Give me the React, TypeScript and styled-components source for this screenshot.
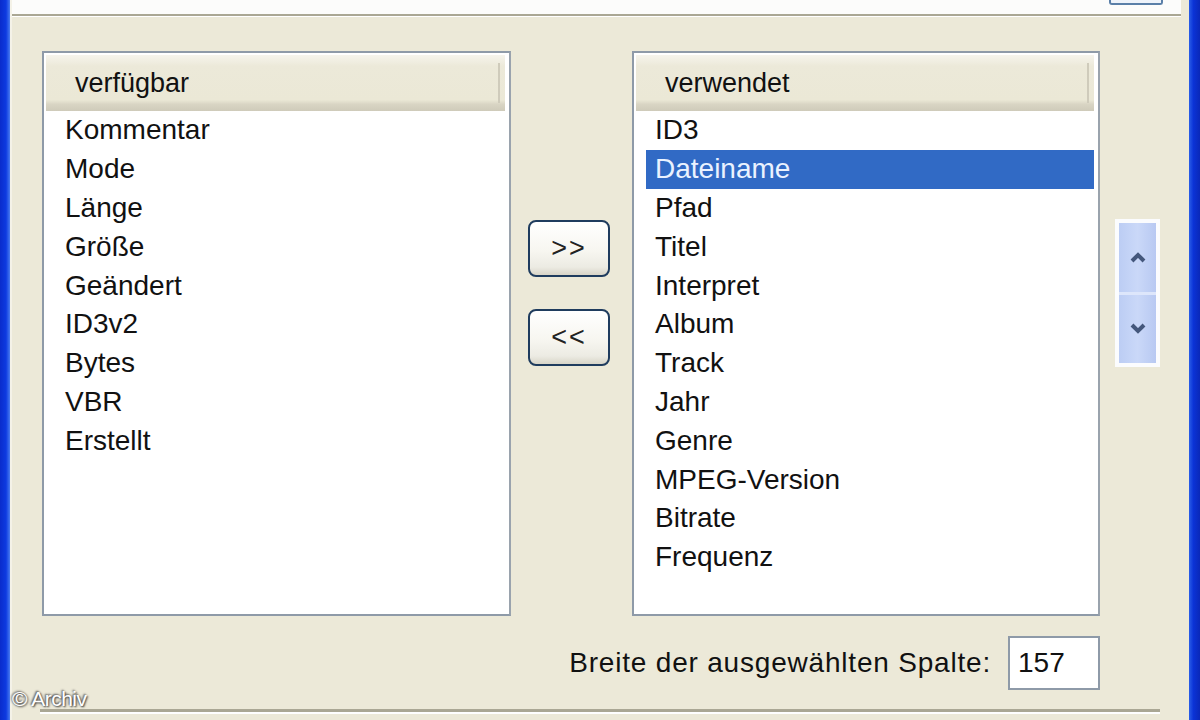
import React from 'react';
import styled, { createGlobalStyle } from 'styled-components';

// style
const GlobalStyle = createGlobalStyle`
  html, body {
    margin: 0;
    padding: 0;
    background: #ece9d8;
  }

  body {
    font-family: "Liberation Sans", Arial, sans-serif;
  }
`;

const Frame = styled.div`
  width: 1200px;
  height: 720px;
  display: flex;
  overflow: hidden;
  position: relative;
`;

const BlueEdge = styled.div<{ $side: 'left' | 'right' }>`
  flex: 0 0 ${(p) => (p.$side === 'left' ? 10 : 11)}px;
  background: ${(p) =>
    p.$side === 'left'
      ? 'linear-gradient(to right, #0a2ccc 0%, #0d3ae0 60%, #4a7cf0 100%)'
      : 'linear-gradient(to right, #2a5ee8 0%, #0b33d6 40%, #0a28b8 100%)'};
`;

const Window = styled.div`
  flex: 1;
  display: flex;
  flex-direction: column;
  background: #ece9d8;
  border-left: 2px solid #f4f2e8;
`;

const TopStrip = styled.div`
  height: 14px;
  display: flex;
  justify-content: flex-end;
  background: #fcfcfb;
  border-bottom: 2px solid #aaa794;
  box-shadow: 0 1px 0 #fff;
  margin-right: 8px;
`;

const TopButton = styled.div`
  width: 50px;
  height: 3px;
  margin-right: 18px;
  border: 2px solid #5a7fa8;
  border-top: none;
  border-radius: 0 0 3px 3px;
  background: #eef3fa;
`;

const Body = styled.div`
  flex: 1;
  display: grid;
  grid-template-columns: 469px 121px 468px 60px;
  grid-template-rows: 565px 74px;
  padding: 35px 0 0 30px;
`;

const ListBox = styled.div`
  background: #fff;
  border: 2px solid #8e9aa8;
  border-right-color: #9aa3ad;
  display: flex;
  flex-direction: column;
  padding: 2px 4px 0 2px;
  overflow: hidden;
`;

const Header = styled.div`
  height: 56px;
  display: flex;
  align-items: center;
  padding-left: 29px;
  font-size: 27px;
  color: #111;
  background: linear-gradient(
    to bottom,
    #f6f4ec 0%,
    #ece9d9 20%,
    #ebe8d6 80%,
    #d9d5c4 88%,
    #cfcbba 100%
  );
  position: relative;

  &::after {
    content: '';
    position: absolute;
    right: 5px;
    top: 8px;
    bottom: 8px;
    width: 2px;
    background: #cfcbbb;
  }
`;

const Items = styled.div`
  display: flex;
  flex-direction: column;
`;

const Item = styled.div<{ $selected?: boolean }>`
  height: 38.8px;
  display: flex;
  align-items: center;
  margin-left: 10px;
  padding-left: 9px;
  font-size: 28px;
  color: ${(p) => (p.$selected ? '#eaf2ff' : '#111')};
  background: ${(p) => (p.$selected ? '#316ac5' : 'transparent')};
`;

const MoveColumn = styled.div`
  display: flex;
  flex-direction: column;
  gap: 32px;
  padding: 169px 22px 0 17px;
`;

const MoveButton = styled.div`
  height: 53px;
  display: flex;
  align-items: center;
  justify-content: center;
  border: 2px solid #1f3c5e;
  border-radius: 8px;
  background: linear-gradient(to bottom, #ffffff 0%, #f7f6f0 55%, #ecebe3 85%, #d8d5c8 100%);
  font-size: 27px;
  color: #222;
  letter-spacing: 2px;
`;

const SpinColumn = styled.div`
  padding: 168px 0 0 15px;
`;

const Spin = styled.div`
  width: 45px;
  height: 148px;
  box-sizing: border-box;
  border: 4px solid #fbfcfe;
  display: flex;
  flex-direction: column;
  background: #c5d4f6;
`;

const SpinHalf = styled.div<{ $top?: boolean }>`
  flex: 1;
  display: flex;
  align-items: center;
  justify-content: center;
  background: linear-gradient(to right, #bccdf4 0%, #cad8f8 50%, #b8c9f2 100%);
  border-bottom: ${(p) => (p.$top ? '3px solid #dde6fb' : 'none')};
`;

const WidthRow = styled.div`
  grid-column: 1 / 4;
  display: flex;
  align-items: flex-start;
  justify-content: flex-end;
  gap: 17px;
  padding-top: 20px;
`;

const WidthLabel = styled.div`
  height: 54px;
  display: flex;
  align-items: center;
  font-size: 28px;
  color: #111;
  letter-spacing: 0.8px;
`;

const WidthInput = styled.div`
  display: flex;
  align-items: center;
  padding-left: 8px;
  box-sizing: border-box;
  width: 92px;
  height: 54px;
  background: #fff;
  border: 2px solid #8e9aa8;
  font-size: 28px;
  color: #111;
`;

const BottomRule = styled.div`
  position: absolute;
  left: 40px;
  right: 40px;
  bottom: 8px;
  height: 3px;
  background: #aaa794;
  box-shadow: 0 2px 0 #fff;
`;

const Credit = styled.div`
  position: absolute;
  left: 12px;
  bottom: 9px;
  font-size: 21px;
  color: #fff;
  text-shadow: 1px 1px 2px #333, -1px -1px 2px #555;
  letter-spacing: -0.5px;
`;

const Arrow = ({ up }: { up?: boolean }) => (
  <svg width="18" height="12" viewBox="0 0 18 12">
    <polyline
      points={up ? '3,10 9,4 15,10' : '3,2 9,8 15,2'}
      fill="none"
      stroke="#44577c"
      strokeWidth="4"
      strokeLinejoin="miter"
    />
  </svg>
);

const available = ['Kommentar', 'Mode', 'Länge', 'Größe', 'Geändert', 'ID3v2', 'Bytes', 'VBR', 'Erstellt'];
const used = [
  'ID3',
  'Dateiname',
  'Pfad',
  'Titel',
  'Interpret',
  'Album',
  'Track',
  'Jahr',
  'Genre',
  'MPEG-Version',
  'Bitrate',
  'Frequenz',
];

export default function App() {
  return (
    <Frame>
      <GlobalStyle />
      <BlueEdge $side="left" />
      <Window>
        <TopStrip>
          <TopButton />
        </TopStrip>
        <Body>
          <ListBox>
            <Header>verfügbar</Header>
            <Items>
              {available.map((name) => (
                <Item key={name}>{name}</Item>
              ))}
            </Items>
          </ListBox>

          <MoveColumn>
            <MoveButton>&gt;&gt;</MoveButton>
            <MoveButton>&lt;&lt;</MoveButton>
          </MoveColumn>

          <ListBox>
            <Header>verwendet</Header>
            <Items>
              {used.map((name) => (
                <Item key={name} $selected={name === 'Dateiname'}>
                  {name}
                </Item>
              ))}
            </Items>
          </ListBox>

          <SpinColumn>
            <Spin>
              <SpinHalf $top>
                <Arrow up />
              </SpinHalf>
              <SpinHalf>
                <Arrow />
              </SpinHalf>
            </Spin>
          </SpinColumn>

          <WidthRow>
            <WidthLabel>Breite der ausgewählten Spalte:</WidthLabel>
            <WidthInput>157</WidthInput>
          </WidthRow>
        </Body>
      </Window>
      <BlueEdge $side="right" />
      <BottomRule />
      <Credit>© Archiv</Credit>
    </Frame>
  );
}
